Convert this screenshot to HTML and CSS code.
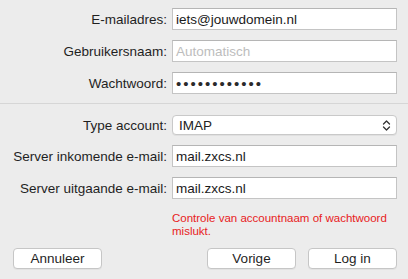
FILE: index.html
```html
<!DOCTYPE html>
<html lang="nl">
<head>
  <meta charset="UTF-8" />
  <meta name="viewport" content="width=device-width, initial-scale=1.0" />
  <title>Account toevoegen</title>
  <link rel="stylesheet" href="styles.css">
</head>
<body>
  <div class="sheet">
    <div class="fields">
      <label class="label">E-mailadres:</label>
      <div class="input">iets@jouwdomein.nl</div>
      <label class="label">Gebruikersnaam:</label>
      <div class="input placeholder">Automatisch</div>
      <label class="label">Wachtwoord:</label>
      <div class="input dots">••••••••••••</div>
    </div>
    <div class="divider"></div>
    <div class="fields">
      <label class="label">Type account:</label>
      <div class="select">
        <span>IMAP</span>
        <svg width="9" height="13" viewBox="0 0 9 13">
          <path d="M1.5 5 L4.5 2 L7.5 5 M1.5 8 L4.5 11 L7.5 8" fill="none" stroke="#333" stroke-width="1.3" stroke-linecap="round" stroke-linejoin="round"/>
        </svg>
      </div>
      <label class="label">Server inkomende e-mail:</label>
      <div class="input">mail.zxcs.nl</div>
      <label class="label">Server uitgaande e-mail:</label>
      <div class="input">mail.zxcs.nl</div>
      <div></div>
      <div class="error">Controle van accountnaam of wachtwoord mislukt.</div>
    </div>
    <div class="buttons">
      <button class="btn">Annuleer</button>
      <div class="right">
        <button class="btn">Vorige</button>
        <button class="btn">Log in</button>
      </div>
    </div>
  </div>
</body>
</html>
```

FILE: styles.css
```css
body {
  margin: 0;
  background: #ececec;
  font-family: "Liberation Sans", Arial, sans-serif;
  font-size: 13.5px;
  color: #222;
}
.sheet {
  width: 408px;
  height: 279px;
  padding-top: 8px;
  box-sizing: border-box;
}
.fields {
  display: grid;
  grid-template-columns: 167px 225px;
  column-gap: 5px;
  row-gap: 10px;
  align-items: center;
}
.label {
  text-align: right;
  color: #1f1f1f;
}
.input {
  height: 22px;
  line-height: 22px;
  background: white;
  border: 1px solid #c4c4c4;
  border-top-color: #b5b5b5;
  box-sizing: border-box;
  padding-left: 3px;
  color: #1a1a1a;
}
.placeholder {
  color: #bdbdbd;
}
.dots {
  font-size: 15px;
  letter-spacing: 2px;
  color: #2a2a2a;
}
.divider {
  height: 1px;
  background: #d6d6d6;
  margin: 9px 0 11px;
}
.select {
  height: 20px;
  background: white;
  border: 1px solid #c9c9c9;
  border-radius: 4px;
  box-sizing: border-box;
  display: flex;
  align-items: center;
  justify-content: space-between;
  padding: 0 5px 0 6px;
  box-shadow: 0 1px 0 rgba(0,0,0,0.05);
}
.error {
  color: #e8211c;
  font-size: 11.5px;
  line-height: 13px;
  margin-top: 3px;
}
.buttons {
  display: flex;
  justify-content: space-between;
  padding: 0 11px 0 13px;
  margin-top: 10px;
}
.right {
  display: flex;
  gap: 12px;
}
.btn {
  width: 89px;
  height: 21px;
  background: white;
  border: 1px solid #c6c6c6;
  border-radius: 4px;
  font-family: inherit;
  font-size: 13.5px;
  color: #1f1f1f;
  padding: 0;
  box-shadow: 0 1px 0 rgba(0,0,0,0.04);
}
```
